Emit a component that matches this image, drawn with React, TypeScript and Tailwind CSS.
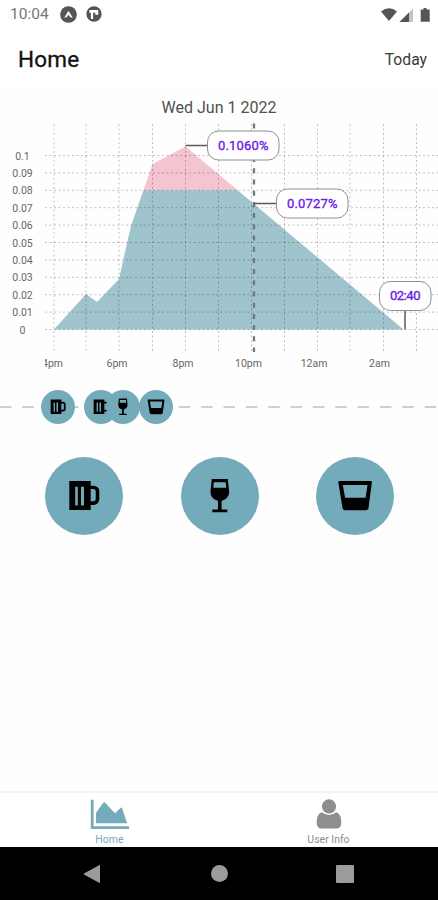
import { useState } from 'react'

type DrinkType = 'beer' | 'wine' | 'spirit'

interface Point {
  x: number
  y: number
}

const gridX = [54, 86, 119, 152.5, 185.5, 218.5, 251.5, 284.5, 317.5, 350, 383.5, 416.5]
const BASE_Y = 211.5
const STEP_Y = 17.4

const yLabels = ['0', '0.01', '0.02', '0.03', '0.04', '0.05', '0.06', '0.07', '0.08', '0.09', '0.1']

const hours = [
  { x: 117, label: '6pm' },
  { x: 183, label: '8pm' },
  { x: 248.5, label: '10pm' },
  { x: 314, label: '12am' },
  { x: 379.5, label: '2am' },
]

const curve: Point[] = [
  { x: 54, y: 211.5 },
  { x: 86, y: 176 },
  { x: 97, y: 184 },
  { x: 119, y: 161 },
  { x: 125, y: 134 },
  { x: 131, y: 108 },
  { x: 152.5, y: 46 },
  { x: 185.5, y: 28.5 },
  { x: 403.5, y: 211.5 },
]

const timeline: { id: number; type: DrinkType; className: string }[] = [
  { id: 1, type: 'beer', className: 'ml-[40.5px]' },
  { id: 2, type: 'beer', className: 'ml-[9.5px]' },
  { id: 3, type: 'wine', className: '-ml-[12px]' },
  { id: 4, type: 'spirit', className: '-ml-[1.5px]' },
]

function DrinkIcon({ type, className }: { type: DrinkType; className: string }) {
  if (type === 'beer') {
    return (
      <svg viewBox="0 0 36 36" className={className}>
        <path
          fillRule="evenodd"
          d="M3.3 3h21.4v4.700h3a5.600 5.600 0 0 1 5.600 5.600v8a5.600 5.600 0 0 1-5.600 5.600h-3V32H3.300zM24.700 11v12.300h2.500a2.500 2.500 0 0 0 2.500-2.500v-7.300a2.500 2.500 0 0 0-2.500-2.500zM9.200 8.800v18.700h2.600V8.800zM15 8.800v18.700h3V8.800z"
        />
      </svg>
    )
  }
  if (type === 'wine') {
    return (
      <svg viewBox="0 0 36 36" className={className}>
        <path
          fillRule="evenodd"
          d="M9.800.900h16l1.300 12.200c.3 4.900-2.600 8.700-7.500 9.600v8.800h5.700v2.700h-15v-2.700h5.700v-8.800c-4.900-.9-7.800-4.700-7.500-9.600zM11.800 4.200l-.5 5.500h12.900l-.5-5.500z"
        />
      </svg>
    )
  }
  return (
    <svg viewBox="0 0 36 36" className={className}>
      <path
        fillRule="evenodd"
        d="M2.400 3h31.400q1.300 0 1.100 1.300L31.500 30q-.4 2.300-2.700 2.300H8.200Q5.900 32.300 5.500 30L1.300 4.300Q1.100 3 2.400 3zM5.800 7l2.300 12.800h20.500L30.500 7z"
      />
    </svg>
  )
}

function Callout({ x, y, width, label }: { x: number; y: number; width: number; label: string }) {
  return (
    <g>
      <rect x={x} y={y} width={width} height={29} rx={11} fill="#fff" stroke="#909090" />
      <text
        x={x + width / 2}
        y={y + 18.5}
        textAnchor="middle"
        fontSize={13}
        fill="#6a20ea"
        stroke="#6a20ea"
        strokeWidth={0.35}
        textLength={width - 21}
      >
        {label}
      </text>
    </g>
  )
}

function BacChart() {
  const area = curve.map(p => `${p.x},${p.y}`).join(' ')
  const limitY = BASE_Y - 8 * STEP_Y

  return (
    <svg viewBox="0 0 438 254" className="block h-[254px] w-full">
      <defs>
        <clipPath id="over-limit">
          <rect x={0} y={0} width={438} height={limitY} />
        </clipPath>
        <clipPath id="under-limit">
          <rect x={0} y={limitY} width={438} height={254} />
        </clipPath>
        <clipPath id="plot">
          <rect x={45} y={0} width={393} height={254} />
        </clipPath>
      </defs>

      <polygon points={area} fill="#f4c4d0" clipPath="url(#over-limit)" />
      <polygon points={area} fill="#9fc4ce" clipPath="url(#under-limit)" />

      <g stroke="#000" strokeOpacity={0.24} strokeDasharray="2 2.5">
        {gridX.map(x => <line key={x} x1={x} x2={x} y1={6} y2={233} />)}
        {yLabels.map((label, i) => (
          <line key={label} x1={45} x2={438} y1={BASE_Y - i * STEP_Y} y2={BASE_Y - i * STEP_Y} />
        ))}
      </g>

      <line x1={254} x2={254} y1={5.5} y2={234} stroke="#73777b" strokeWidth={2.3} strokeDasharray="5 6.2" />

      <g fontSize={10.5} fill="#666" textAnchor="middle">
        {yLabels.map((label, i) => (
          <text key={label} x={22.5} y={BASE_Y - i * STEP_Y + 4}>{label}</text>
        ))}
        <text x={52.5} y={248.5} clipPath="url(#plot)">4pm</text>
        {hours.map(h => <text key={h.label} x={h.x} y={248.5}>{h.label}</text>)}
      </g>

      <g stroke="#5a5a5a" strokeWidth={1.5}>
        <line x1={185.5} x2={208} y1={27.5} y2={27.5} />
        <line x1={254} x2={277} y1={85.5} y2={85.5} />
        <line x1={405} x2={405} y1={192} y2={211.5} />
      </g>
      <Callout x={207.5} y={13} width={71.5} label="0.1060%" />
      <Callout x={276.5} y={71} width={71.5} label="0.0727%" />
      <Callout x={379.5} y={163.5} width={51.5} label="02:40" />
    </svg>
  )
}

function StatusBar() {
  return (
    <div className="flex h-[30px] items-center justify-between pl-[10px] pr-[7px] text-[#777]">
      <div className="flex items-center">
        <span className="w-[50px] text-[15.5px] leading-none">10:04</span>
        <svg viewBox="0 0 18 18" className="-mt-[2px] h-[17px] w-[17px]">
          <circle cx="9" cy="9" r="8.8" fill="#555" />
          <path d="M4.500 12.500 8.300 6q.7-1 1.400 0l3.800 6.500-2.500-.5L9 9.200l-2 2.800z" fill="#fff" />
        </svg>
        <svg viewBox="0 0 18 18" className="-mt-[2px] ml-[9px] h-[16px] w-[16px]">
          <circle cx="9" cy="9" r="8.600" fill="#555" />
          <path d="M3.800 4.500h10v5.300h-3.300V7.500H8v7H5.500v-7H3.800z" fill="#fff" />
        </svg>
      </div>
      <svg viewBox="0 0 50 16" className="-mt-[1px] h-[16px] w-[50px]" fill="#555">
        <path d="M0 4.500Q8-2 16 4.500L8 14z" />
        <path d="M32 1.500V15H18.500z" fill="#c4c4c4" />
        <path d="M28 5.500V15h-9.500z" />
        <path d="M42.500 1h3v1.500h3.200v12.200h-9V2.500h2.800z" />
      </svg>
    </div>
  )
}

function SystemNav() {
  return (
    <div className="flex h-[53px] items-center justify-between bg-black pl-[83px] pr-[84px] text-[#9b9b9b]">
      <svg viewBox="0 0 18 20" className="h-[20px] w-[18px]" fill="currentColor">
        <path d="M16.500 1.500v17L1 10z" stroke="currentColor" strokeLinejoin="round" />
      </svg>
      <div className="ml-[1px] h-[17px] w-[17px] rounded-full bg-current" />
      <div className="h-[18px] w-[18px] rounded-[1px] bg-current" />
    </div>
  )
}

export default function App() {
  const [tab, setTab] = useState('home')

  return (
    <div className="flex h-[900px] w-[438px] flex-col overflow-hidden bg-white font-['Roboto',sans-serif]">
      <StatusBar />
      <header className="flex h-[60px] items-center justify-between border-b border-[#fbfbfb] pl-[18px] pr-[11px]">
        <h1 className="text-[22.5px] tracking-[0.2px] text-[#111] [-webkit-text-stroke:0.3px_#111]">Home</h1>
        <button className="text-[15.7px] text-[#3a3a3a]">Today</button>
      </header>

      <main className="flex flex-1 flex-col bg-[#fefefe]">
        <h2 className="h-[28px] pt-[5.5px] text-center text-[16px] leading-[24px] text-[#505050]">Wed Jun 1 2022</h2>
        <BacChart />

        <div className="mt-[17.5px] grid h-[35px] items-center">
          <svg className="col-start-1 row-start-1 h-[2px] w-full">
            <line x1="0" x2="438" y1="1" y2="1" stroke="#b5c5c3" strokeWidth="1.6" strokeDasharray="11.5 10.85" />
          </svg>
          <div className="col-start-1 row-start-1 flex">
            {timeline.map(d => (
              <div
                key={d.id}
                className={`flex h-[34px] w-[34px] flex-shrink-0 items-center justify-center rounded-full bg-[#74abbb] ${d.className}`}
              >
                <DrinkIcon type={d.type} className="h-[18px] w-[18px]" />
              </div>
            ))}
          </div>
        </div>

        <div className="mt-[32px] flex justify-between pl-[45px] pr-[44px]">
          {(['beer', 'wine', 'spirit'] as DrinkType[]).map(type => (
            <button key={type} className="flex h-[78px] w-[78px] items-center justify-center rounded-full bg-[#74abbb]">
              <DrinkIcon type={type} className="h-[36px] w-[36px]" />
            </button>
          ))}
        </div>
      </main>

      <nav className="grid h-[56px] grid-cols-2 border-t-2 border-[#f2f2f2] bg-white text-[10.5px] leading-[12px]">
        <button
          onClick={() => setTab('home')}
          className={`flex flex-col items-center pt-[6px] ${tab === 'home' ? 'text-[#74abbb]' : 'text-[#8e8e8e]'}`}
        >
          <svg viewBox="0 0 40 31" className="h-[31px] w-[40px]" fill="currentColor">
            <path d="M.800.700h2.800v26.500H39V30H.800z" />
            <path d="M6 24.300V13.700L13.500 3.500q.7-.8 1.400 0L25 14.300l5.800-5.600q.9-.7 1.300.3l5 15.300z" />
          </svg>
          <span className="mt-[4px]">Home</span>
        </button>
        <button
          onClick={() => setTab('user')}
          className={`flex flex-col items-center pt-[6px] ${tab === 'user' ? 'text-[#74abbb]' : 'text-[#8e8e8e]'}`}
        >
          <svg viewBox="0 0 26 31" className="h-[31px] w-[26px]" fill="currentColor">
            <circle cx="13" cy="7.400" r="7.100" />
            <path d="M5.700 13.200q7.300 5.600 14.600 0 5 1.500 5 10.500 0 5.800-5 5.800H5.700q-5 0-5-5.800 0-9 5-10.500z" />
          </svg>
          <span className="mt-[4px]">User Info</span>
        </button>
      </nav>
      <SystemNav />
    </div>
  )
}
